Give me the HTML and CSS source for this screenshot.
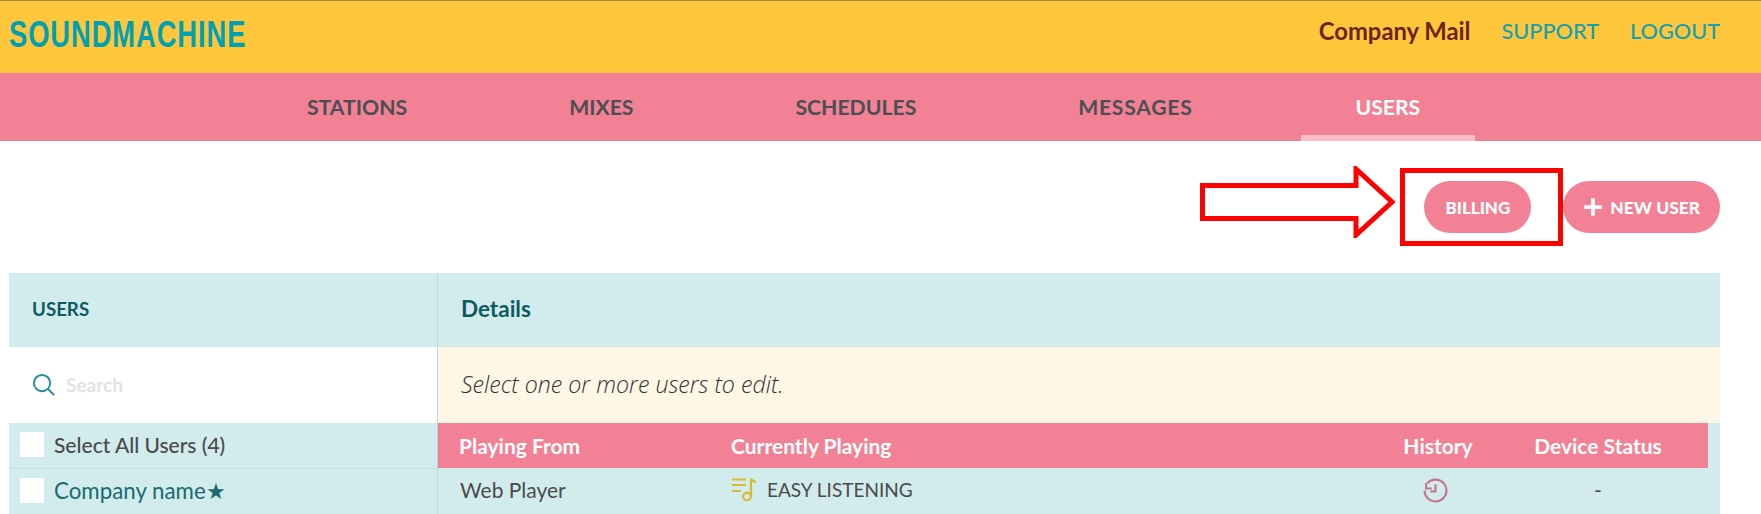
FILE: index.html
```html
<!DOCTYPE html>
<html lang="en">
<head>
    <meta charset="UTF-8">
    <title>Soundmachine Users</title>
    <link rel="stylesheet" href="styles.css">
</head>
<body>
    <header class="topbar">
        <div class="logo">SOUNDMACHINE</div>
        <div class="toplinks">
            <a class="company">Company Mail</a>
            <a>SUPPORT</a>
            <a>LOGOUT</a>
        </div>
    </header>

    <nav class="mainnav">
        <a>STATIONS</a>
        <a>MIXES</a>
        <a>SCHEDULES</a>
        <a class="messages">MESSAGES</a>
        <a class="active">USERS</a>
    </nav>

    <div class="toolbar">
        <button class="pill">BILLING</button>
        <button class="pill new-user">
            <svg class="plus" viewBox="0 0 16 16"><path d="M8 1v14M1 8h14"/></svg>
            NEW USER
        </button>

        <!-- red annotation on top of the screenshot -->
        <svg class="note-arrow" viewBox="0 0 196 72">
            <path d="M2.500 19.500H156V3L192 36L156 69V52.500H2.500Z"/>
        </svg>
        <div class="note-box"></div>
    </div>

    <div class="panel">
        <div class="left">
            <div class="panel-head caps">USERS</div>
            <div class="search">
                <svg class="search-icon" viewBox="0 0 24 24"><circle cx="10.500" cy="10.500" r="8.500"/><path d="M16.500 16.500L23 23"/></svg>
                <span>Search</span>
            </div>
            <div class="user-row select-all">
                <span class="check"></span>
                Select All Users (4)
            </div>
            <div class="user-row">
                <span class="check"></span>
                <a>Company name★</a>
            </div>
        </div>
        <div class="right">
            <div class="panel-head">Details</div>
            <div class="hint">Select one or more users to edit.</div>
            <div class="cols cols-head">
                <div>Playing From</div>
                <div>Currently Playing</div>
                <div class="center">History</div>
                <div class="center">Device Status</div>
            </div>
            <div class="cols cols-row">
                <div>Web Player</div>
                <div class="playing">
                    <svg class="music-icon" viewBox="0 0 24 24">
                        <path d="M0 2.500H14M0 8H14M0 14H9M19 19V1.500C19.500 4 22 3.500 24 5.500"/>
                        <circle cx="15" cy="19.500" r="3.800"/>
                    </svg>
                    <span class="station">EASY LISTENING</span>
                </div>
                <div class="center">
                    <svg class="history-icon" viewBox="0 0 24 24">
                        <path d="M4.200 5A10.500 10.500 0 1 1 1.500 12M3 4.500V10H8.500M12 6V13H7"/>
                    </svg>
                </div>
                <div class="center">-</div>
            </div>
        </div>
    </div>
</body>
</html>
```

FILE: styles.css
```css
html, body {
    margin: 0;
    height: 514px;
    overflow: hidden;
}
body {
    font-family: "Lato", "Noto Sans", sans-serif;
    background-color: #fff;
    color: #4a4a4a;
}
.topbar {
    height: 72px;
    background-color: #fec73b;
    border-top: 1px solid #a08a45;
    display: flex;
    justify-content: space-between;
    align-items: center;
    padding: 0 41px 0 9px;
}
.logo {
    font-family: "Liberation Sans", sans-serif;
    font-weight: bold;
    font-size: 37px;
    letter-spacing: 1.2px;
    color: #00a0b2;
    margin-top: -5px;
    transform: scaleX(0.74);
    transform-origin: left center;
}
.toplinks {
    display: flex;
    gap: 31px;
    font-size: 21.700px;
    font-weight: 500;
    color: #169fb2;
    margin-top: -12px;
}
.company {
    color: #6d2418;
    font-size: 23.800px;
    font-weight: 700;
    line-height: 26px;
}
.mainnav {
    height: 68px;
    background-color: #f38195;
    display: flex;
    gap: 56px;
    padding-left: 254px;
    font-size: 21.200px;
    font-weight: 700;
    color: #4b4f52;
}
.mainnav a {
    padding: 0 53px;
    line-height: 68px;
    box-sizing: border-box;
}
.mainnav .messages {
    letter-spacing: 0.700px;
}
.mainnav .active {
    color: #fff;
    border-bottom: 6px solid #f9bdc8;
    height: 68px;
    padding: 0 55px 0 54px;
}
.toolbar {
    position: relative;
    height: 132px;
    display: flex;
    justify-content: flex-end;
    align-items: flex-start;
    gap: 32px;
    padding: 40px 41px 0 0;
    box-sizing: border-box;
}
.pill {
    height: 52px;
    padding: 0 21px;
    border: none;
    border-radius: 26px;
    background-color: #f38195;
    color: #fff;
    font-family: inherit;
    font-size: 17px;
    font-weight: 900;
    display: flex;
    align-items: center;
}
.new-user {
    padding: 0 20px;
    gap: 7px;
    font-size: 17.400px;
}
.plus {
    width: 20px;
    height: 20px;
    fill: none;
    stroke: #fff;
    stroke-width: 3;
}
.note-arrow {
    position: absolute;
    left: 1200px;
    top: 25px;
    width: 196px;
    height: 72px;
    fill: #fff;
    stroke: #f00;
    stroke-width: 5;
}
.note-box {
    position: absolute;
    left: 1400px;
    top: 27px;
    width: 163px;
    height: 78px;
    border: 5px solid #f00;
    box-sizing: border-box;
}
.panel {
    display: grid;
    grid-template-columns: 428px 1283px;
    margin-left: 9px;
    font-size: 21px;
}
.panel-head {
    height: 74px;
    line-height: 72px;
    background-color: #d2ecee;
    color: #0d5a60;
    font-size: 22.500px;
    font-weight: 700;
    padding-left: 23px;
}
.panel-head.caps {
    font-size: 18.700px;
    padding-left: 23px;
}
.search {
    height: 76px;
    display: flex;
    align-items: center;
    gap: 11px;
    padding: 0 0 2px 23px;
    box-sizing: border-box;
    color: #e2e2e2;
    font-size: 19px;
    font-weight: 700;
}
.search-icon {
    width: 23px;
    height: 23px;
    fill: none;
    stroke: #1d8f96;
    stroke-width: 2;
}
.user-row {
    height: 46px;
    background-color: #d2ecee;
    display: flex;
    align-items: center;
    gap: 10px;
    padding: 0 0 2px 11px;
    border-top: 1px solid #c3e0e2;
    box-sizing: border-box;
}
.select-all {
    height: 45px;
    border-top: none;
    font-weight: 500;
}
.user-row a {
    color: #1a6a6e;
    font-size: 22.300px;
}
.check {
    width: 24px;
    height: 25px;
    background-color: #fff;
}
.right {
    border-left: 1px solid #bcd8da;
    box-sizing: border-box;
    background-color: #d2ecee;
}
.hint {
    height: 76px;
    line-height: 74px;
    background-color: #fff7e6;
    font-family: "Open Sans", sans-serif;
    font-size: 23.200px;
    font-style: italic;
    font-weight: 300;
    color: #333;
    padding-left: 23px;
}
.cols {
    display: grid;
    grid-template-columns: 293px 657px 100px 220px;
    align-items: center;
}
.cols > div:first-child {
    padding-left: 21px;
}
.cols-head {
    height: 45px;
    width: 1270px;
    background-color: #f38195;
    color: #fff;
    font-weight: 700;
}
.cols-row {
    grid-template-columns: 294px 656px 100px 220px;
    height: 46px;
    width: 1270px;
    padding-bottom: 4px;
    box-sizing: border-box;
}
.cols-row > div:first-child {
    padding-left: 22px;
}
.center {
    text-align: center;
}
.playing {
    display: flex;
    align-items: center;
    gap: 11px;
}
.station {
    font-size: 19px;
}
.music-icon {
    width: 24px;
    height: 24px;
    fill: none;
    stroke: #d9bb33;
    stroke-width: 2.200;
}
.history-icon {
    width: 25px;
    height: 25px;
    fill: none;
    stroke: #c9708a;
    stroke-width: 2;
    vertical-align: middle;
    margin-right: 6px;
}
```
